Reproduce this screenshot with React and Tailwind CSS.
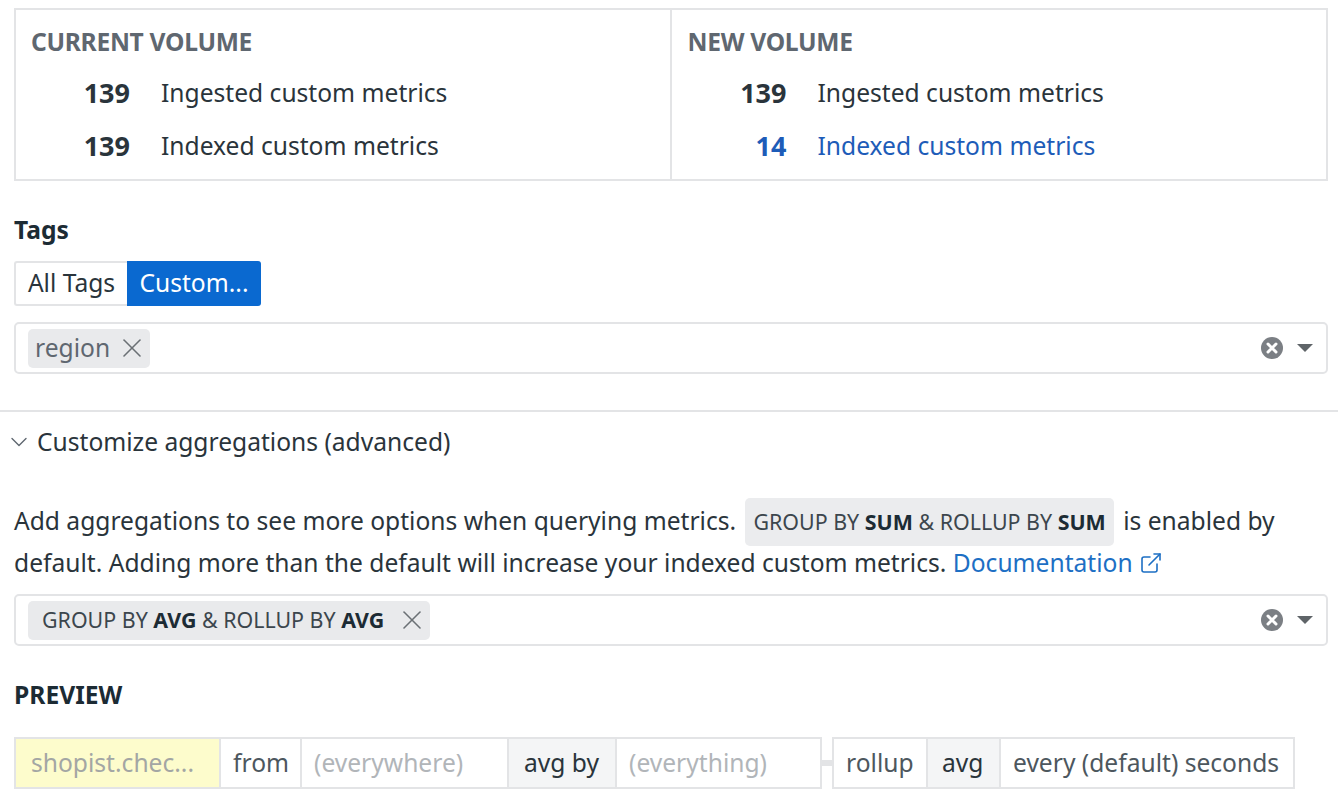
import React from "react";
import { X, ChevronDown, ExternalLink } from "lucide-react";

function ClearCaret() {
  return (
    <div className="ml-auto flex items-center gap-3 pr-3">
      <svg width="24" height="24" viewBox="0 0 24 24">
        <circle cx="12" cy="12" r="11" fill="#7b7f84" />
        <path d="M8 8l8 8M16 8l-8 8" stroke="#fff" strokeWidth="3" strokeLinecap="round" />
      </svg>
      <svg width="18" height="10" viewBox="0 0 18 10">
        <path d="M1 1h16l-8 8z" fill="#5f6468" />
      </svg>
    </div>
  );
}

function Metric({ value, label, blue }) {
  return (
    <div className={`flex items-center h-[53px] ${blue ? "text-[#1d5cb8]" : "text-[#2a343b]"}`}>
      <span className="w-[115px] text-right font-bold text-[27px]">{value}</span>
      <span className="ml-[31px]">{label}</span>
    </div>
  );
}

function Cell({ w, bg = "", color, children, last }) {
  return (
    <div className={`${w} ${bg} ${color} flex items-center px-[12px] whitespace-nowrap ${last ? "" : "border-r-2 border-[#e3e4e6]"}`}>
      {children}
    </div>
  );
}

export default function App() {
  return (
    <div className="w-[1338px] h-[806px] overflow-hidden bg-white text-[24.6px] text-[#2a343b]" style={{ fontFamily: '"Noto Sans", "Open Sans", sans-serif' }}>
      <div className="pl-[14px] pr-[10px] pt-[8px]">
        {/* volume summary */}
        <div className="flex h-[173px]">
          <div className="flex-1 border-2 border-[#e3e4e6] pl-[15px] pt-[17px]">
            <div className="font-bold text-[#5f6770] uppercase leading-[30px] tracking-[-0.3px]">Current Volume</div>
            <div className="-ml-[16px] mt-[10px]">
              <Metric value="139" label="Ingested custom metrics" />
              <Metric value="139" label="Indexed custom metrics" />
            </div>
          </div>
          <div className="flex-1 border-2 border-l-0 border-[#e3e4e6] pl-[16px] pt-[17px]">
            <div className="font-bold text-[#5f6770] uppercase leading-[30px] tracking-[-0.3px]">New Volume</div>
            <div className="-ml-[16px] mt-[10px]">
              <Metric value="139" label="Ingested custom metrics" />
              <Metric value="14" label="Indexed custom metrics" blue />
            </div>
          </div>
        </div>

        {/* tags */}
        <div className="mt-[34px] font-bold text-[#1c2b34] leading-[30px]">Tags</div>
        <div className="mt-[16px] flex h-[45px]">
          <button className="w-[113px] border-2 border-[#e3e4e6] border-r-0 rounded-l-[3px] text-[#2a343b]">All Tags</button>
          <button className="w-[134px] bg-[#0a69d0] text-white rounded-r-[3px]">Custom...</button>
        </div>
        <div className="mt-[16px] h-[52px] flex items-center border-2 border-[#e3e4e6] rounded-[5px] pl-[12px]">
          <span className="flex items-center gap-[6px] h-[39px] pl-[7px] pr-[2px] bg-[#e9eaec] rounded-[5px] text-[#5f6770]">
            region
            <X size={32} strokeWidth={1.2} className="text-[#6b7075]" />
          </span>
          <ClearCaret />
        </div>
      </div>

      <div className="mt-[36px] border-t-2 border-[#e3e4e6]" />

      <div className="pl-[14px] pr-[10px]">
        <div className="flex items-center h-[60px] -ml-[9px]">
          <ChevronDown size={28} strokeWidth={1.2} className="text-[#5f6770]" />
          <span className="ml-[4px]">Customize aggregations (advanced)</span>
        </div>

        <p className="mt-[28px] leading-[41px] text-[#2a343b]">
          Add aggregations to see more options when querying metrics.{" "}
          <span className="inline-block -my-[4px] mx-[3px] px-[8px] leading-[48px] bg-[#ebecee] rounded-[5px] text-[21.4px] text-[#3c464d]">
            GROUP BY <b className="text-[#1c2b34]">SUM</b> &amp; ROLLUP BY <b className="text-[#1c2b34]">SUM</b>
          </span>{" "}
          is enabled by default. Adding more than the default will increase your indexed custom metrics.{" "}
          <span className="text-[#1d6fc4] whitespace-nowrap">
            Documentation <ExternalLink size={24} strokeWidth={1.6} className="inline -mt-[5px]" />
          </span>
        </p>

        <div className="mt-[11px] h-[52px] flex items-center border-2 border-[#e3e4e6] rounded-[5px] pl-[12px]">
          <span className="flex items-center gap-[12px] h-[39px] pl-[14px] pr-[2px] bg-[#e9eaec] rounded-[5px] text-[21.4px] text-[#3c464d]">
            <span>
              GROUP BY <b className="text-[#1c2b34]">AVG</b> &amp; ROLLUP BY <b className="text-[#1c2b34]">AVG</b>
            </span>
            <X size={32} strokeWidth={1.2} className="text-[#6b7075]" />
          </span>
          <ClearCaret />
        </div>

        <div className="mt-[34px] font-bold text-[#1c2b34] leading-[30px]">PREVIEW</div>

        <div className="mt-[27px] flex items-center">
          <div className="flex h-[52px] border-2 border-[#e3e4e6]">
            <Cell w="w-[205px] !px-[15px]" bg="bg-[#fdfccc]" color="text-[#a3a6a4]">shopist.chec...</Cell>
            <Cell w="w-[81px]" color="text-[#4d575e]">from</Cell>
            <Cell w="w-[207px]" color="text-[#b1b5b9]">(everywhere)</Cell>
            <Cell w="w-[108px] !px-[15px]" bg="bg-[#f4f5f6]" color="text-[#2a343b]">avg by</Cell>
            <Cell w="w-[203px]" color="text-[#b1b5b9]" last>(everything)</Cell>
          </div>
          <div className="w-[10px] h-[6px] bg-[#e3e4e6]" />
          <div className="flex h-[52px] border-2 border-[#e3e4e6]">
            <Cell w="w-[94px]" color="text-[#4d575e]">rollup</Cell>
            <Cell w="w-[73px] !px-[14px]" bg="bg-[#f4f5f6]" color="text-[#2a343b]">avg</Cell>
            <Cell w="w-[292px]" color="text-[#4d575e]" last>every (default) seconds</Cell>
          </div>
        </div>
      </div>
    </div>
  );
}
